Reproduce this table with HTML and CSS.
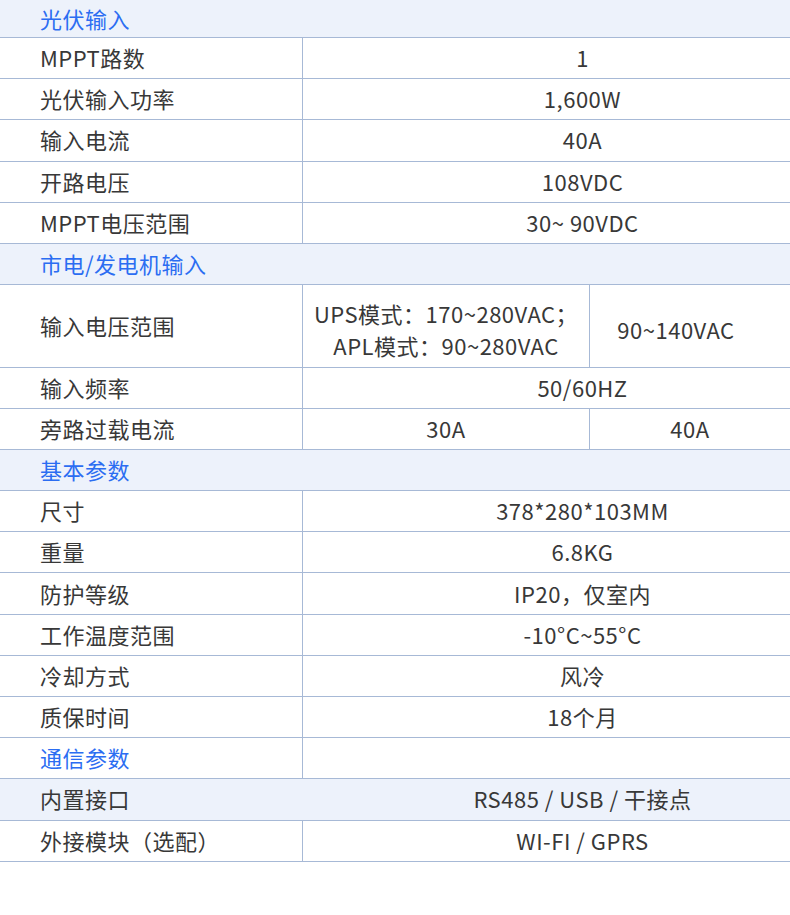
FILE: index.html
```html
<!DOCTYPE html>
<html lang="zh">
<head>
<meta charset="utf-8">
<link rel="stylesheet" href="styles.css">
</head>
<body>
<div class="spec">
  <div class="row head first"><div class="label">光伏输入</div></div>
  <div class="row"><div class="label">MPPT路数</div><div class="val">1</div></div>
  <div class="row"><div class="label">光伏输入功率</div><div class="val">1,600W</div></div>
  <div class="row"><div class="label">输入电流</div><div class="val">40A</div></div>
  <div class="row"><div class="label">开路电压</div><div class="val">108VDC</div></div>
  <div class="row"><div class="label">MPPT电压范围</div><div class="val">30~ 90VDC</div></div>

  <div class="row head"><div class="label">市电/发电机输入</div></div>
  <div class="row tall"><div class="label">输入电压范围</div><div class="val split"><div class="sub a two">UPS模式：170~280VAC；<br>APL模式：90~280VAC</div><div class="sub b shift">90~140VAC</div></div></div>
  <div class="row"><div class="label">输入频率</div><div class="val">50/60HZ</div></div>
  <div class="row"><div class="label">旁路过载电流</div><div class="val split"><div class="sub a">30A</div><div class="sub b">40A</div></div></div>

  <div class="row head"><div class="label">基本参数</div></div>
  <div class="row"><div class="label">尺寸</div><div class="val">378*280*103MM</div></div>
  <div class="row"><div class="label">重量</div><div class="val">6.8KG</div></div>
  <div class="row"><div class="label">防护等级</div><div class="val">IP20，仅室内</div></div>
  <div class="row"><div class="label">工作温度范围</div><div class="val">-10°C~55°C</div></div>
  <div class="row"><div class="label">冷却方式</div><div class="val">风冷</div></div>
  <div class="row"><div class="label">质保时间</div><div class="val">18个月</div></div>

  <div class="row"><div class="label blue">通信参数</div><div class="val"></div></div>
  <div class="row shade"><div class="label">内置接口</div><div class="val nodiv">RS485 / USB / 干接点</div></div>
  <div class="row"><div class="label">外接模块（选配）</div><div class="val">WI-FI / GPRS</div></div>
</div>
</body>
</html>
```

FILE: styles.css
```css
* { box-sizing: border-box; }
html, body {
  margin: 0;
  padding: 0;
  background: #ffffff;
}
body {
  font-family: "Noto Sans CJK SC", "Noto Sans", sans-serif;
  font-size: 22px;
  letter-spacing: 0.5px;
  color: #383838;
  width: 790px;
  height: 915px;
  overflow: hidden;
}
.spec {
  display: flex;
  flex-direction: column;
}
.row {
  display: grid;
  grid-template-columns: 302px 1fr;
  height: 41.2px;
  border-bottom: 1px solid #a7b9d6;
}
.row.first { height: 38px; }
.row.tall { height: 82.4px; }
.row.head, .row.shade { background: #edf2fb; }
.row.head { grid-template-columns: 1fr; }
.label {
  display: flex;
  align-items: center;
  padding-left: 40px;
  padding-bottom: 2px;
  white-space: nowrap;
}
.head .label, .label.blue { color: #2b6df2; }
.val {
  display: flex;
  align-items: center;
  justify-content: center;
  padding-left: 72px;
  padding-bottom: 2px;
  border-left: 1px solid #a7b9d6;
  white-space: nowrap;
}
.val.nodiv { border-left-color: transparent; }
.val.split {
  display: grid;
  grid-template-columns: 286px 1fr;
  align-items: stretch;
  padding-left: 0;
  padding-bottom: 0;
}
.sub {
  display: flex;
  align-items: center;
  justify-content: center;
  text-align: center;
  padding-bottom: 2px;
}
.sub.b { border-left: 1px solid #a7b9d6; }
.sub.two {
  line-height: 32px;
  padding-top: 6px;
  padding-bottom: 0;
}
.sub.shift { padding-right: 28px; padding-top: 6px; padding-bottom: 0; }
```
